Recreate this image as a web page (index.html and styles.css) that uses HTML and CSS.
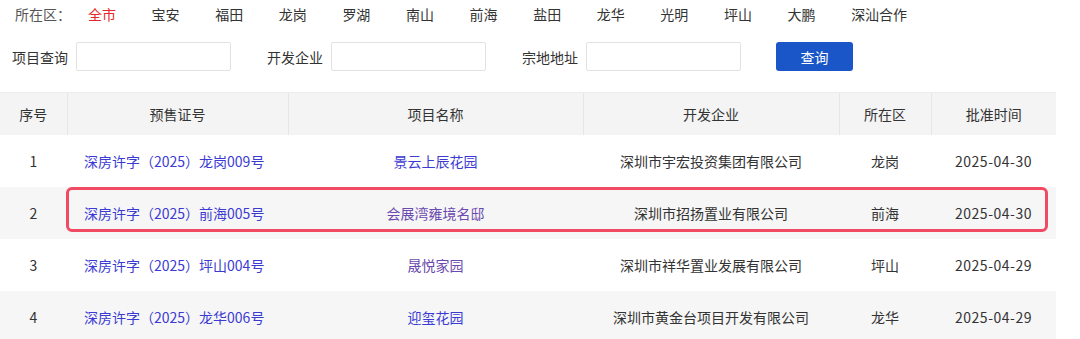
FILE: index.html
```html
<!DOCTYPE html>
<html lang="zh-CN">
<head>
<meta charset="utf-8">
<title>预售证查询</title>
<link rel="stylesheet" href="styles.css">
</head>
<body>
<div class="page">
  <nav class="district">
    <span class="district-label">所在区：</span>
    <ul class="district-list">
      <li class="active">全市</li>
      <li>宝安</li>
      <li>福田</li>
      <li>龙岗</li>
      <li>罗湖</li>
      <li>南山</li>
      <li>前海</li>
      <li>盐田</li>
      <li>龙华</li>
      <li>光明</li>
      <li>坪山</li>
      <li>大鹏</li>
      <li>深汕合作</li>
    </ul>
  </nav>

  <form class="search">
    <label class="field"><span class="field-label">项目查询</span><input class="field-input" type="text"></label>
    <label class="field"><span class="field-label">开发企业</span><input class="field-input" type="text"></label>
    <label class="field"><span class="field-label">宗地地址</span><input class="field-input" type="text"></label>
    <button class="search-btn" type="button">查询</button>
  </form>

  <div class="table-wrap">
    <table class="list">
      <colgroup>
        <col class="c-no"><col class="c-cert"><col class="c-name"><col class="c-dev"><col class="c-area"><col class="c-date">
      </colgroup>
      <thead>
        <tr><th>序号</th><th>预售证号</th><th>项目名称</th><th>开发企业</th><th>所在区</th><th>批准时间</th></tr>
      </thead>
      <tbody>
        <tr>
          <td>1</td>
          <td class="left"><a class="link" href="#">深房许字（2025）龙岗009号</a></td>
          <td><a class="link" href="#">景云上辰花园</a></td>
          <td>深圳市宇宏投资集团有限公司</td>
          <td>龙岗</td>
          <td class="num">2025-04-30</td>
        </tr>
        <tr>
          <td>2</td>
          <td class="left"><a class="link" href="#">深房许字（2025）前海005号</a></td>
          <td><a class="link visited" href="#">会展湾雍境名邸</a></td>
          <td>深圳市招扬置业有限公司</td>
          <td>前海</td>
          <td class="num">2025-04-30</td>
        </tr>
        <tr>
          <td>3</td>
          <td class="left"><a class="link" href="#">深房许字（2025）坪山004号</a></td>
          <td><a class="link visited" href="#">晟悦家园</a></td>
          <td>深圳市祥华置业发展有限公司</td>
          <td>坪山</td>
          <td class="num">2025-04-29</td>
        </tr>
        <tr>
          <td>4</td>
          <td class="left"><a class="link" href="#">深房许字（2025）龙华006号</a></td>
          <td><a class="link" href="#">迎玺花园</a></td>
          <td>深圳市黄金台项目开发有限公司</td>
          <td>龙华</td>
          <td class="num">2025-04-29</td>
        </tr>
      </tbody>
    </table>
    <div class="row-mark"></div>
  </div>
</div>
</body>
</html>
```

FILE: styles.css
```css
* {
  box-sizing: border-box;
}

html, body {
  margin: 0;
  padding: 0;
  background: #fff;
}

body {
  font-family: "Noto Sans CJK SC", "Microsoft YaHei", "Noto Sans", sans-serif;
  font-size: 14px;
  color: #333;
  overflow: hidden;
}

.page {
  width: 1080px;
}

/* district filter */
.district {
  display: flex;
  align-items: center;
  height: 28px;
  padding-left: 15px;
}

.district-label {
  color: #555;
  width: 73px;
  line-height: 28px;
}

.district-list {
  display: flex;
  gap: 35.6px;
  margin: 0;
  padding: 0;
  list-style: none;
}

.district-list li {
  line-height: 28px;
  color: #333;
  cursor: pointer;
}

.district-list li.active {
  color: #e8262c;
}

/* search form */
.search {
  display: flex;
  align-items: center;
  margin: 14px 0 0;
  padding-left: 12px;
  height: 29px;
}

.field {
  display: flex;
  align-items: center;
  gap: 8px;
  margin-right: 36px;
}

.field-label {
  width: 56px;
  white-space: nowrap;
  color: #333;
  line-height: 20px;
}

.field-input {
  width: 155px;
  height: 29px;
  border: 1px solid #e2e2e2;
  border-radius: 2px;
  padding: 0 6px;
  outline: none;
  font: inherit;
}

.search-btn {
  width: 77px;
  height: 29px;
  margin-left: -1px;
  border: 0;
  border-radius: 3px;
  background: #1a56c8;
  color: #fff;
  font: inherit;
  font-size: 14px;
  cursor: pointer;
}

/* result table */
.table-wrap {
  position: relative;
  margin-top: 21px;
  width: 1056px;
}

.list {
  width: 1056px;
  border-collapse: collapse;
  table-layout: fixed;
}

.c-no { width: 67px; }
.c-cert { width: 221px; }
.c-name { width: 295px; }
.c-dev { width: 256px; }
.c-area { width: 92px; }
.c-date { width: 125px; }

.list th {
  height: 42px;
  padding: 0;
  background: #f4f4f4;
  border-top: 1px solid #ececec;
  border-left: 1px solid #e6e6e6;
  font-weight: normal;
  color: #333;
  text-align: center;
}

.list th:first-child {
  border-left: 0;
}

.list td {
  height: 52px;
  padding: 0;
  text-align: center;
  color: #333;
  white-space: nowrap;
}

.list td.left {
  text-align: left;
  padding-left: 17px;
}

.list td.num {
  letter-spacing: 0.5px;
}

.list tbody tr:nth-child(even) td {
  background: #f6f6f6;
}

.link {
  color: #3b3bd2;
  text-decoration: none;
}

.link.visited {
  color: #6a4aae;
}

/* highlight drawn over the second row */
.row-mark {
  position: absolute;
  left: 66px;
  top: 95px;
  width: 982px;
  height: 45px;
  border: 3px solid #f04b63;
  border-radius: 6px;
  pointer-events: none;
}
```
